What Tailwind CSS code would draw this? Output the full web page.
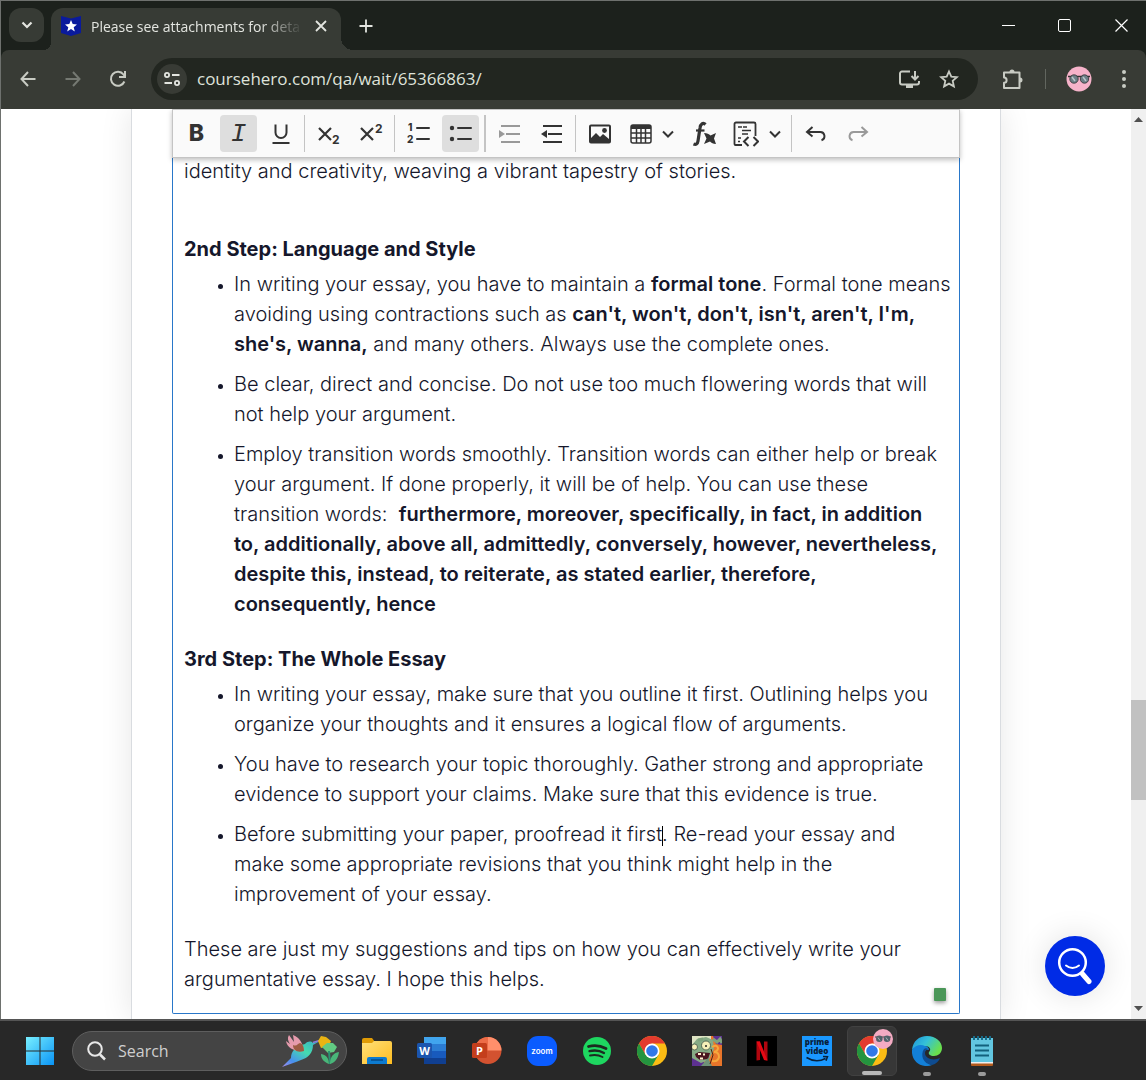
<!DOCTYPE html>
<html lang="en">
<head>
    <meta charset="UTF-8">
    <meta name="viewport" content="width=device-width, initial-scale=1.0">
    <title>Please see attachments for details</title>
    <script src="https://cdn.jsdelivr.net/npm/@tailwindcss/browser@4"></script>
</head>
<body class="flex flex-col h-screen overflow-hidden bg-[#282828] font-['Open_Sans',sans-serif]">

    <!-- Browser window -->
    <div class="flex flex-col flex-1 min-h-0 border-t border-l border-[#6e716e] bg-[#1c211c]">

        <!-- Tab strip -->
        <header class="flex h-[49px] shrink-0 text-[#e3e5e0]">
            <button class="flex items-center justify-center w-[35px] h-[34px] mt-[7px] ml-2 rounded-xl bg-[#373b35]" aria-label="Search tabs">
                <svg width="14" height="14" viewBox="0 0 14 14" fill="none" stroke="currentColor" stroke-width="2.200"><path d="M2.500 4.500L7 9l4.500-4.500"/></svg>
            </button>
            <div class="flex items-end -ml-px">
                <div class="w-2 h-2 bg-[radial-gradient(circle_at_0_0,#1c211c_8px,#373b35_8px)]"></div>
                <div class="flex items-center w-[290px] h-[42px] pl-[10px] pr-[10px] pb-[6px] rounded-t-xl bg-[#373b35]">
                    <svg width="20" height="20" viewBox="0 0 20 20"><path d="M0 0l10 2.500L20 0v17l-10 3-10-3z" fill="#0a1a9c"/><path d="M10 4l1.700 4.100 4.300.3-3.300 2.800 1.100 4.200L10 13.100l-3.800 2.300 1.100-4.200L4 8.400l4.300-.3z" fill="#fff"/></svg>
                    <span class="flex-1 ml-[10px] mr-2 overflow-hidden whitespace-nowrap text-[14px] mask-r-from-80% mask-r-to-100%">Please see attachments for deta</span>
                    <button class="flex items-center justify-center w-5 h-5" aria-label="Close tab">
                        <svg width="12" height="12" viewBox="0 0 12 12" stroke="currentColor" stroke-width="1.800"><path d="M1 1l10 10M11 1L1 11"/></svg>
                    </button>
                </div>
                <div class="w-3 h-3 bg-[radial-gradient(circle_at_100%_0,#1c211c_12px,#373b35_12px)]"></div>
            </div>
            <button class="flex items-center justify-center w-[26px] h-[49px]" aria-label="New tab">
                <svg width="14" height="14" viewBox="0 0 14 14" stroke="currentColor" stroke-width="1.800"><path d="M7 .5v13M.5 7h13"/></svg>
            </button>
            <div class="flex ml-auto text-white">
                <button class="flex items-center justify-center w-14 h-[49px]" aria-label="Minimize"><svg width="13" height="13" viewBox="0 0 13 13" stroke="currentColor"><path d="M0 6.500h13"/></svg></button>
                <button class="flex items-center justify-center w-14 h-[49px]" aria-label="Maximize"><svg width="13" height="13" viewBox="0 0 13 13" fill="none" stroke="currentColor"><rect x=".5" y=".5" width="12" height="12" rx="1.500"/></svg></button>
                <button class="flex items-center justify-center w-[54px] h-[49px]" aria-label="Close"><svg class="ml-1" width="13" height="13" viewBox="0 0 13 13" stroke="currentColor" stroke-width="1.200"><path d="M.5.5l12 12M12.500.5l-12 12"/></svg></button>
            </div>
        </header>

        <!-- Address row -->
        <div class="flex items-center h-[59px] shrink-0 pb-px pl-[7px] rounded-t-lg bg-[#383b35] text-[#c8cbc3]">
            <button class="flex justify-center w-10" aria-label="Back"><svg width="16" height="16" viewBox="0 0 16 16" fill="none" stroke="currentColor" stroke-width="2"><path d="M15.500 8H2M8 1L1.500 8 8 15"/></svg></button>
            <button class="flex justify-center w-[49px] text-[#757972]" aria-label="Forward"><svg width="16" height="16" viewBox="0 0 16 16" fill="none" stroke="currentColor" stroke-width="2"><path d="M.5 8H14M8 1l6.500 7L8 15"/></svg></button>
            <button class="flex justify-center w-[42px]" aria-label="Reload"><svg width="18" height="18" viewBox="0 0 18 18" fill="none" stroke="currentColor" stroke-width="2"><path d="M15.400 11.500A7 7 0 1 1 14.500 4.500l2 2"/><path d="M16 1v6h-6"/></svg></button>
            <div class="flex items-center flex-1 h-[42px] ml-3 pl-[6px] pr-[19px] rounded-full bg-[#222620]">
                <button class="flex items-center justify-center w-[30px] h-[30px] rounded-full bg-[#383b35] text-[#e3e5e0]" aria-label="Site information">
                    <svg width="16" height="14" viewBox="0 0 16 14" fill="none" stroke="currentColor" stroke-width="1.800"><circle cx="3" cy="3" r="2.100"/><path d="M8 3h7.500M.5 11H8"/><circle cx="13" cy="11" r="2.100"/></svg>
                </button>
                <input type="text" value="coursehero.com/qa/wait/65366863/" aria-label="Address" class="flex-1 min-w-0 ml-[10px] bg-transparent text-[17px] text-[#dfe2da] outline-none">
                <button class="mr-[19px]" aria-label="Install app"><svg width="21" height="19" viewBox="0 0 21 19" fill="none" stroke="currentColor" stroke-width="2"><path d="M11 1.500H3a2 2 0 0 0-2 2v9a2 2 0 0 0 2 2h15a2 2 0 0 0 2-2V11M16 1v8M12.500 6L16 9.500 19.500 6"/><path d="M7 15h7v3H7z" fill="currentColor" stroke="none"/></svg></button>
                <button aria-label="Bookmark"><svg width="20" height="20" viewBox="0 0 20 20" fill="none" stroke="currentColor" stroke-width="1.800"><path d="M10 2.500l2.300 5.100 5.600.6-4.200 3.700 1.200 5.500L10 14.600l-4.900 2.800 1.200-5.500-4.200-3.700 5.600-.6z"/></svg></button>
            </div>
            <button class="ml-[24px]" aria-label="Extensions"><svg width="22" height="22" viewBox="0 0 22 22" fill="none" stroke="currentColor" stroke-width="2"><path d="M2 4.500h15.500v15.500H2v-5.200a2.600 2.600 0 0 0 0-5.200z" stroke-linejoin="round"/><path d="M7.500 4a2.500 2.500 0 0 1 5 0zM18 9.500a2.500 2.500 0 0 1 0 5z" fill="currentColor" stroke="none"/></svg></button>
            <span class="w-px h-5 ml-[21px] bg-[#62665f]"></span>
            <button class="ml-[20px]" aria-label="Profile">
                <svg width="26" height="26" viewBox="0 0 26 26"><circle cx="13" cy="13" r="12.500" fill="#f6b3ca"/><path d="M2 10.500h22" stroke="#333" stroke-width="1.500"/><circle cx="8" cy="13" r="4.200" fill="#6d7f87" stroke="#303030" stroke-width=".8"/><circle cx="18.500" cy="13" r="4.200" fill="#6d7f87" stroke="#303030" stroke-width=".8"/><path d="M6 11l3 4M17 11l3 4" stroke="#b9c6c9" stroke-width="1.500"/></svg>
            </button>
            <button class="flex justify-center w-[45px] ml-[9px]" aria-label="Menu"><svg width="4" height="18" viewBox="0 0 4 18" fill="currentColor"><circle cx="2" cy="2" r="2"/><circle cx="2" cy="9" r="2"/><circle cx="2" cy="16" r="2"/></svg></button>
        </div>

        <!-- Page -->
        <div class="relative flex flex-1 min-h-0 bg-white">
            <main class="flex-1 min-w-0 overflow-hidden">
                <div class="w-full max-w-[870px] h-full mx-auto px-10 border-x border-[#d9dce0] shadow-[0_0_30px_rgba(0,0,0,0.1)]">
                    <!-- Editor toolbar -->
                    <div class="relative z-10 flex items-center gap-[5px] h-[49px] px-[5px] border border-[#c4c4c4] bg-[#fafafa] shadow-[0_2px_5px_rgba(0,0,0,0.25)] text-[#333333]" role="toolbar">
                        <button class="w-[37px] h-[37px] font-['Inter',sans-serif] font-extrabold text-[23px] leading-[37px]" aria-label="Bold">B</button>
                        <button class="w-[37px] h-[37px] rounded-sm bg-[#dedede] font-['Liberation_Mono',monospace] italic text-[26px] leading-[39px]" aria-label="Italic">I</button>
                        <button class="flex items-center justify-center w-[37px] h-[37px]" aria-label="Underline"><svg width="20" height="22" viewBox="0 0 20 22" fill="none" stroke="currentColor" stroke-width="2"><path d="M4.500 1.500v8a5.500 5.500 0 0 0 11 0v-8M1.500 20h17"/></svg></button>
                        <span class="w-px h-[37px] bg-[#c4c4c4]"></span>
                        <button class="flex items-center justify-center w-[37px] h-[37px]" aria-label="Subscript"><svg width="24" height="24" viewBox="0 0 24 24" stroke="currentColor" stroke-width="2.200"><path d="M2 6l12 12M14 6L2 18"/><text x="15" y="22" font-family="Inter" font-size="12" font-weight="700" fill="currentColor" stroke="none">2</text></svg></button>
                        <button class="flex items-center justify-center w-[37px] h-[37px]" aria-label="Superscript"><svg width="24" height="24" viewBox="0 0 24 24" stroke="currentColor" stroke-width="2.200"><path d="M2 6l12 12M14 6L2 18"/><text x="16" y="11" font-family="Inter" font-size="12" font-weight="700" fill="currentColor" stroke="none">2</text></svg></button>
                        <span class="w-px h-[37px] bg-[#c4c4c4]"></span>
                        <button class="flex items-center justify-center w-[37px] h-[37px]" aria-label="Numbered list"><svg width="24" height="24" viewBox="0 0 24 24" stroke="currentColor" stroke-width="2"><path d="M10 6h12M10 17h12" stroke-linecap="round"/><g font-family="Inter" font-size="10" font-weight="800" fill="currentColor" stroke="none"><text x="1" y="9">1</text><text x="0" y="21">2</text></g></svg></button>
                        <button class="flex items-center justify-center w-[37px] h-[37px] rounded-sm bg-[#dedede]" aria-label="Bulleted list"><svg width="24" height="24" viewBox="0 0 24 24" stroke="currentColor" stroke-width="2"><path d="M9 6h13M9 17h13" stroke-linecap="round"/><g fill="currentColor" stroke="none"><circle cx="3" cy="6" r="2.200"/><circle cx="3" cy="17" r="2.200"/></g></svg></button>
                        <span class="w-0.5 h-[37px] bg-[#c4c4c4]"></span>
                        <button class="flex items-center justify-center w-[37px] h-[37px] text-[#999999]" aria-label="Increase indent"><svg width="24" height="22" viewBox="0 0 24 22" stroke="currentColor" stroke-width="2"><path d="M3 3h19M8 11h14M3 19h19"/><path d="M1 7l6 4-6 4z" fill="currentColor" stroke="none"/></svg></button>
                        <button class="flex items-center justify-center w-[37px] h-[37px]" aria-label="Decrease indent"><svg width="24" height="22" viewBox="0 0 24 22" stroke="currentColor" stroke-width="2.200"><path d="M3 3h19M8 11h14M3 19h19"/><path d="M7 7l-6 4 6 4z" fill="currentColor" stroke="none"/></svg></button>
                        <span class="w-px h-[37px] bg-[#c4c4c4]"></span>
                        <button class="flex items-center justify-center w-[37px] h-[37px]" aria-label="Insert image"><svg width="22" height="20" viewBox="0 0 22 20"><rect x="1" y="1.500" width="20" height="17" rx="1" fill="none" stroke="currentColor" stroke-width="2"/><path d="M2 18v-4l5-5 4 4 3-3 6 5v3z" fill="currentColor"/><circle cx="15.500" cy="6.500" r="2.400" fill="currentColor"/></svg></button>
                        <button class="flex items-center justify-center gap-[10px] w-[58px] h-[37px]" aria-label="Insert table"><svg width="22" height="20" viewBox="0 0 22 20" fill="none" stroke="currentColor" stroke-width="1.500"><rect x="1" y="1" width="20" height="18" rx="2"/><path d="M1 3h20" stroke-width="4"/><path d="M1 9h20M1 14h20M6.500 4v15M11 4v15M15.500 4v15"/></svg><svg width="12" height="8" viewBox="0 0 12 8" fill="none" stroke="currentColor" stroke-width="2"><path d="M1 1.500l5 5 5-5"/></svg></button>
                        <button class="flex items-center justify-center w-[37px] h-[37px]" aria-label="Insert formula"><svg width="26" height="26" viewBox="0 0 26 26" fill="none" stroke="currentColor"><path d="M13.500 3.500C11 1 8.500 3 8 7L6 20c-.5 3-2 4-4.500 3" stroke-width="3.200"/><path d="M4 9.500h8.500" stroke-width="2.200"/><path d="M12 12c3 0 5 1 6.500 2.500L24 12l-2 5.500 2 5.500c-3 0-4.500-1-6-2.500L12 23l2.500-5.500z" fill="currentColor" stroke="none"/></svg></button>
                        <button class="flex items-center justify-center gap-[10px] w-[58px] h-[37px]" aria-label="Insert code block"><svg class="shrink-0" width="26" height="26" viewBox="0 0 26 26" fill="none" stroke="currentColor" stroke-width="1.800"><path d="M9 24H2.500a1 1 0 0 1-1-1V3a1.500 1.500 0 0 1 1.500-1.500h18A1.500 1.500 0 0 1 22.500 3v12"/><path d="M5 6h4M9 9.500h9M9 13h6M5 17h3M5 20.500h2M10 6h4" stroke-width="1.500"/><path d="M15.500 16l-4.500 4.500 4.500 4.500M20.500 16l4.500 4.500-4.500 4.500" stroke-width="2"/></svg><svg class="shrink-0" width="12" height="8" viewBox="0 0 12 8" fill="none" stroke="currentColor" stroke-width="2"><path d="M1 1.500l5 5 5-5"/></svg></button>
                        <span class="w-px h-[37px] bg-[#c4c4c4]"></span>
                        <button class="flex items-center justify-center w-[37px] h-[37px]" aria-label="Undo"><svg width="22" height="16" viewBox="0 0 22 16" fill="none" stroke="currentColor" stroke-width="2"><path d="M7.500 1L2 6l5.500 4.500M2.500 6H15a4.200 4.200 0 0 1 1.500 8.200"/></svg></button>
                        <button class="flex items-center justify-center w-[37px] h-[37px] text-[#999999]" aria-label="Redo"><svg width="22" height="16" viewBox="0 0 22 16" fill="none" stroke="currentColor" stroke-width="2"><path d="M14.500 1L20 6l-5.500 4.500M19.500 6H7a4.200 4.200 0 0 0-1.500 8.200"/></svg></button>
                    </div>

                    <!-- Editor content -->
                    <div class="relative -mt-0.5 pl-[11px] pr-2 pb-[19px] border border-t-0 border-[#2977c9] rounded-b-xs font-['Inter',sans-serif] font-light text-[20px] leading-[30px] text-[#15172b] whitespace-nowrap">
                        <p class="mb-12">identity and creativity, weaving a vibrant tapestry of stories.</p>

                        <h2 class="mb-[5px] font-bold">2nd Step: Language and Style</h2>
                        <ul class="flex flex-col gap-[10px] mb-[25px] pl-[50px] list-disc marker:text-[14px]">
                            <li>In writing your essay, you have to maintain a <b class="font-semibold">formal tone</b>. Formal tone means<br>avoiding using contractions such as <b class="font-semibold">can't, won't, don't, isn't, aren't, I'm,<br>she's, wanna,</b> and many others. Always use the complete ones.</li>
                            <li>Be clear, direct and concise. Do not use too much flowering words that will<br>not help your argument.</li>
                            <li>Employ transition words smoothly. Transition words can either help or break<br>your argument. If done properly, it will be of help. You can use these<br>transition words:&nbsp; <b class="font-semibold">furthermore, moreover, specifically, in fact, in addition<br>to, additionally, above all, admittedly, conversely, however, nevertheless,<br>despite this, instead, to reiterate, as stated earlier, therefore,<br>consequently, hence</b></li>
                        </ul>

                        <h2 class="mb-[5px] font-bold">3rd Step: The Whole Essay</h2>
                        <ul class="flex flex-col gap-[10px] mb-[25px] pl-[50px] list-disc marker:text-[14px]">
                            <li>In writing your essay, make sure that you outline it first. Outlining helps you<br>organize your thoughts and it ensures a logical flow of arguments.</li>
                            <li>You have to research your topic thoroughly. Gather strong and appropriate<br>evidence to support your claims. Make sure that this evidence is true.</li>
                            <li>Before submitting your paper, proofread it first<span class="inline-block w-px h-5 -mr-px align-middle bg-black"></span>. Re-read your essay and<br>make some appropriate revisions that you think might help in the<br>improvement of your essay.</li>
                        </ul>

                        <p>These are just my suggestions and tips on how you can effectively write your<br>argumentative essay. I hope this helps.</p>
                        <span class="absolute right-[13px] bottom-3 w-3 h-[13px] rounded-[1px] bg-[#4a9658] shadow-[0_2px_4px_rgba(0,0,0,0.4)]"></span>
                    </div>
                </div>
            </main>

            <button class="absolute right-[41px] bottom-[23px] flex items-center justify-center w-[60px] h-[60px] rounded-full bg-[#002be6] shadow-[0_0_32px_rgba(0,0,0,0.12)]" aria-label="Help search">
                <svg width="36" height="38" viewBox="0 0 36 38" fill="none" stroke="#fff" stroke-linecap="round"><circle cx="15.500" cy="15.500" r="13.300" stroke-width="2.500"/><path d="M9 18.500q6.500 5 13 0" stroke-width="2"/><path d="M25.500 27l6.500 7.500" stroke-width="5"/></svg>
            </button>

            <!-- Scrollbar -->
            <div class="flex flex-col items-center w-[15px] py-2 bg-[#f0f0f0]">
                <svg width="9" height="5" viewBox="0 0 9 5" fill="#505050"><path d="M0 5l4.500-5L9 5z"/></svg>
                <div class="w-full h-[100px] mt-[578px] bg-[#c1c1c1]"></div>
                <svg class="mt-auto" width="9" height="5" viewBox="0 0 9 5" fill="#505050"><path d="M0 0l4.500 5L9 0z"/></svg>
            </div>
        </div>
    </div>

    <!-- Taskbar -->
    <footer class="flex items-center h-[61px] shrink-0 pl-[25px] border-t-2 border-[#555555] bg-[#282828]">
        <button class="shrink-0" aria-label="Start">
            <svg width="30" height="30" viewBox="0 0 30 30"><defs><linearGradient id="win" x1="0" y1="0" x2="1" y2="1"><stop offset="0" stop-color="#78efff"/><stop offset="1" stop-color="#0a94f5"/></linearGradient></defs><path d="M1 1h13.500v13.500H1zM15.500 1H29v13.500H15.500zM1 15.500h13.500V29H1zM15.500 15.500H29V29H15.500z" fill="url(#win)"/></svg>
        </button>
        <div class="flex items-center w-[275px] h-10 ml-[17px] pl-[14px] pr-1 rounded-full border border-[#5e5e5e] bg-[#444444]">
            <svg class="shrink-0" width="19" height="20" viewBox="0 0 19 20" fill="none" stroke="#e8e8e8" stroke-width="2"><circle cx="8" cy="8" r="6.800"/><path d="M13 13.500l5 5" stroke-width="2.500"/></svg>
            <input type="text" placeholder="Search" aria-label="Search" class="flex-1 min-w-0 ml-3 bg-transparent text-base text-white placeholder:text-[#cfcfcf] outline-none">
            <svg class="shrink-0" width="62" height="34" viewBox="0 0 62 34">
                <defs><linearGradient id="bird" x1="1" y1="0" x2="0" y2="1"><stop offset="0" stop-color="#37a8c9"/><stop offset=".4" stop-color="#45dcae"/><stop offset=".75" stop-color="#4790ee"/><stop offset="1" stop-color="#a88bec"/></linearGradient></defs>
                <path d="M25 10c3-3 6-3 8-1l7-2-7 4c0 8-5 13-12 15l-5 2-14 5 9-9c0-6 4-12 14-14z" fill="url(#bird)"/>
                <path d="M24 17C15 18 7 14 6 7l4 3c-2-3-3-6-1-9l5 7-1-7c6 2 10 8 11 16z" fill="#e59bad"/>
                <path d="M24 17c-7 2-11-1-11-6 4 2 5-2 7-2 3 1 4 4 4 8z" fill="#9c5b43"/>
                <path d="M33 8.500l8-2.500" stroke="#8d7bdc" stroke-width="1.500"/>
                <path d="M38 7l3-5 5 1 5 4-2 5-8 2z" fill="#eab413"/>
                <path d="M42 13l5-4 6 0 4 4-3 5-6 1z" fill="#62ca82"/>
                <path d="M49 17l1 13" stroke="#2b9272" stroke-width="2"/>
                <path d="M49 30c-5-2-8-5-8-10 6 1 8 5 8 10zM50 30c0-7 3-11 9-12-1 6-3 10-9 12z" fill="#49b679"/>
            </svg>
        </div>

        <nav class="flex items-center ml-[2px] text-white">
            <button class="flex justify-center w-[55px]" aria-label="File Explorer"><svg width="30" height="30" viewBox="0 0 30 30"><defs><linearGradient id="fold" x1="0" y1="0" x2="1" y2="1"><stop offset="0" stop-color="#ffe07a"/><stop offset="1" stop-color="#ffbd20"/></linearGradient></defs><path d="M0 4a2 2 0 0 1 2-2h8l3 4v4H0z" fill="#e09b05"/><path d="M0 7h10l2-2h16a2 2 0 0 1 2 2v21H0z" fill="url(#fold)"/><path d="M5 28v-5a2 2 0 0 1 2-2h16a2 2 0 0 1 2 2v5z" fill="#0d7bd0"/><path d="M9 24h12" stroke="#064a87" stroke-width="1.500"/></svg></button>
            <button class="flex justify-center w-[55px]" aria-label="Word"><svg width="30" height="30" viewBox="0 0 30 30"><path d="M7 1h22v7H7z" fill="#41a5ee"/><path d="M7 8h22v7H7z" fill="#2b7cd3"/><path d="M7 15h22v7H7z" fill="#185abd"/><path d="M7 22h22v6H7z" fill="#103f91"/><rect y="7" width="15" height="15" rx="1.500" fill="#1b55ae"/><text x="7.500" y="18.500" text-anchor="middle" font-family="Open Sans" font-size="11" font-weight="700" fill="#fff">W</text></svg></button>
            <button class="flex justify-center w-[55px]" aria-label="PowerPoint"><svg width="30" height="30" viewBox="0 0 30 30"><circle cx="16" cy="14.500" r="13.500" fill="#d35230"/><path d="M16 1A13.500 13.500 0 0 0 2.500 14.500H16z" fill="#ed6c47"/><path d="M16 1a13.500 13.500 0 0 1 13.500 13.500H16z" fill="#ff8f6b"/><rect y="7" width="15" height="15" rx="1.500" fill="#c43e1c"/><text x="7.500" y="18.500" text-anchor="middle" font-family="Open Sans" font-size="11" font-weight="700" fill="#fff">P</text></svg></button>
            <button class="flex justify-center w-[55px]" aria-label="Zoom"><svg width="30" height="30" viewBox="0 0 30 30"><rect width="30" height="30" rx="11" fill="#0b5cff"/><text x="15" y="17.500" text-anchor="middle" font-family="Inter" font-size="8" font-weight="600" fill="#fff">zoom</text></svg></button>
            <button class="flex justify-center w-[55px]" aria-label="Spotify"><svg width="28" height="28" viewBox="0 0 28 28" fill="none" stroke="#1c2a20" stroke-linecap="round"><circle cx="14" cy="14" r="14" fill="#1ed760" stroke="none"/><path d="M5.500 9.500q9-2.500 17.500 2" stroke-width="2.800"/><path d="M6.500 14.200q8-2 14.500 1.800" stroke-width="2.300"/><path d="M7 18.500q7-1.500 12.500 1.500" stroke-width="1.900"/></svg></button>
            <button class="flex justify-center w-[55px]" aria-label="Chrome"><svg width="30" height="30" viewBox="0 0 30 30"><circle cx="15" cy="15" r="15" fill="#fbbc14"/><path d="M2 7.500A15 15 0 0 1 28 7.500H15L8.500 18.800z" fill="#e33b2e"/><path d="M2 7.500A15 15 0 0 0 15 30l6.500-11.200H8.500z" fill="#24943f"/><circle cx="15" cy="15" r="7.500" fill="#fff"/><circle cx="15" cy="15" r="5.800" fill="#3078e8"/></svg></button>
            <button class="flex justify-center w-[55px]" aria-label="Plants vs. Zombies 3"><svg width="30" height="30" viewBox="0 0 30 30"><path d="M0 0h30v30H0z" fill="#e8752a"/><path d="M0 0h19v9L0 10z" fill="#dfe4c3"/><path d="M0 21h12v9H0zM21 0h9v9l-6-1z" fill="#5d3191"/><path d="M0 9L5 3l9-2 7 3 1 9-3 6-2 5-8 3-9-5z" fill="#86ab85"/><circle cx="14" cy="9.500" r="4.500" fill="#f7efb8" stroke="#3f5245" stroke-width=".8"/><circle cx="14" cy="10" r="1" fill="#222"/><circle cx="2.500" cy="11" r="3" fill="#f7efb8" stroke="#3f5245" stroke-width=".8"/><path d="M3 18l4-2 11 1-2 6-8 1-4-3z" fill="#4a1520"/><path d="M6 18h3M11 18.500h2M8 22.500h3" stroke="#fff3cf" stroke-width="2"/><path d="M9 30l7-8 4 8z" fill="#6e9278"/><path d="M20 11q5-3 6 1 0 3-4 4 5 0 5 5-1 5-7 4" stroke="#f6a83c" stroke-width="2" fill="none"/><path d="M19 13l2 6-3 9" stroke="#4c2416" fill="none"/><path d="M21 3l4 3 3-3 2 4M6 4l5-1" stroke="#7fa37d" stroke-width="3" fill="none"/></svg></button>
            <button class="flex justify-center w-[55px]" aria-label="Netflix"><svg width="30" height="30" viewBox="0 0 30 30"><path d="M0 0h30v30H0z" fill="#000"/><path d="M9.500 5.500h3.500V24l-3.500.5zM17 5.500h3.500v19L17 24z" fill="#b1060f"/><path d="M9.500 5.500H13l7.500 19L17 24z" fill="#e50914"/></svg></button>
            <button class="flex justify-center w-[55px]" aria-label="Prime Video"><svg width="30" height="30" viewBox="0 0 30 30"><path d="M0 0h30v30H0z" fill="#1a98ff"/><g text-anchor="middle" font-family="Open Sans" font-size="8" font-weight="800" fill="#08213b"><text x="15" y="9">prime</text><text x="15" y="18">video</text></g><path d="M4.500 21.500q9.500 6 19 1M21 20.500l4.500.3-1.500 4" fill="none" stroke="#08213b" stroke-width="1.500"/></svg></button>
            <button class="relative flex items-center justify-center w-[50px] h-[50px] mx-[3px] rounded-md border border-[#414141] bg-[#373737]" aria-label="Chrome, running">
                <svg width="30" height="30" viewBox="0 0 30 30"><circle cx="15" cy="15" r="15" fill="#fbbc14"/><path d="M2 7.500A15 15 0 0 1 28 7.500H15L8.500 18.800z" fill="#e33b2e"/><path d="M2 7.500A15 15 0 0 0 15 30l6.500-11.200H8.500z" fill="#24943f"/><circle cx="15" cy="15" r="7.500" fill="#fff"/><circle cx="15" cy="15" r="5.800" fill="#3078e8"/></svg>
                <svg class="absolute top-[2px] right-[3px]" width="20" height="20" viewBox="0 0 20 20"><circle cx="10" cy="10" r="10" fill="#f4abc3"/><path d="M2 8h16" stroke="#444"/><circle cx="6.300" cy="9.800" r="3.300" fill="#526069"/><circle cx="14" cy="9.800" r="3.300" fill="#526069"/><path d="M5 8.500l2 3M13 8.500l2 3" stroke="#a9b4b8"/></svg>
                <span class="absolute bottom-0 w-5 h-1 rounded-full bg-[#b8b8b8]"></span>
            </button>
            <button class="relative flex items-center justify-center w-[54px] h-[50px]" aria-label="Edge, running">
                <svg width="30" height="30" viewBox="0 0 30 30"><defs><linearGradient id="edge" x1="0" y1="0" x2="1" y2=".5"><stop offset="0" stop-color="#1b8fdb"/><stop offset=".5" stop-color="#35c1d8"/><stop offset="1" stop-color="#6ae04c"/></linearGradient></defs><path d="M0 14C1 5 7 0 15 0c9 0 15 6 15 12 0 5-4 8-8 8-4 0-6-2-5-4 3-3 0-6-4-6C7 10 2 12 0 14z" fill="url(#edge)"/><path d="M0 14c3-5 9-6 13-4 2 0 4 2 4 4-3-1-5 1-5 4 0 4 3 10 8 11C9 33-1 25 0 14z" fill="#1380d8"/><path d="M12 13c-4 6-1 15 8 16 4-1 7-4 8-7-6 3-15 1-15-5 0-2 1-3 3-4-1-1-3-1-4 0z" fill="#0e4c91"/></svg>
                <span class="absolute bottom-0 w-2 h-1 rounded-full bg-[#9b9b9b]"></span>
            </button>
            <button class="relative flex items-center justify-center w-[55px] h-[50px]" aria-label="Notepad, running">
                <svg width="22" height="30" viewBox="0 0 22 30"><path d="M0 24h22v5a1 1 0 0 1-1 1H1a1 1 0 0 1-1-1z" fill="#b35a1c"/><path d="M0 2h22v24H0z" fill="#62c6e0"/><path d="M0 26h22v1.500H0z" fill="#eee"/><path d="M4 9.500h14M4 14.500h14M4 19.500h14" stroke="#12617d" stroke-width="1.800"/><path d="M3 0v4M7 0v4M11 0v4M15 0v4M19 0v4" stroke="#176a88" stroke-width="2"/></svg>
                <span class="absolute bottom-0 w-2 h-1 rounded-full bg-[#9b9b9b]"></span>
            </button>
        </nav>
    </footer>
</body>
</html>
